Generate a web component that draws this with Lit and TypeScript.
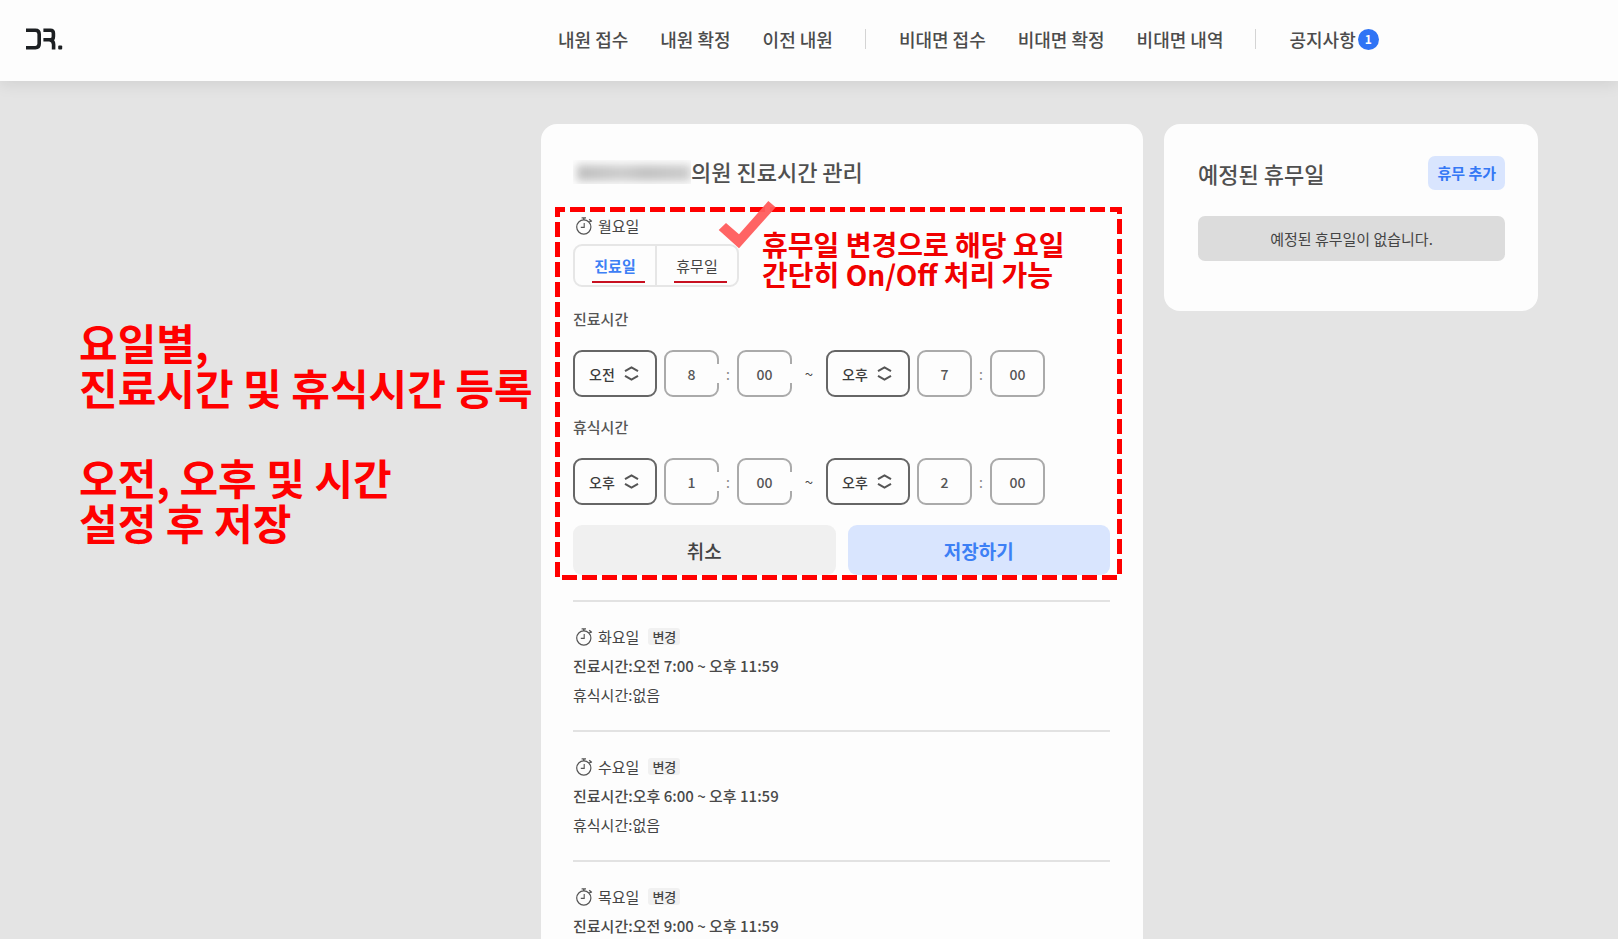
import { LitElement, html, css } from "lit";
import { customElement, property, state } from "lit/decorators.js";
import { classMap } from "lit/directives/class-map.js";

type DayHours = { day: string; open: string; rest: string };
type TimeValue = { half: string; hour: string; minute: string };

const stopwatch = html`<svg class="stopwatch" width="18" height="18" viewBox="0 0 18 18" fill="none" stroke="#555" aria-hidden="true">
  <circle cx="8.8" cy="10" r="7.1" stroke-width="1.2" />
  <path d="M6.6 0.9h4.4M8.8 1v2M14 3.4l1.6 1.4M14.2 2.2l2.6 2.4" stroke-width="1.4" />
  <path d="M9.2 6v4.4H5.8" stroke-width="1.1" />
</svg>`;

@customElement("time-field")
class TimeField extends LitElement {
  @property({ attribute: false }) value: TimeValue = { half: "오전", hour: "0", minute: "00" };
  @property() name = "";
  @property({ type: Boolean }) notched = false;

  static styles = css`
    :host {
      display: flex;
      align-items: center;
      font-family: "Noto Sans CJK KR", sans-serif;
      font-size: 14px;
      font-weight: 500;
      color: #555;
    }
    * {
      box-sizing: border-box;
    }
    .half {
      position: relative;
      margin-right: 7px;
    }
    select,
    input {
      display: block;
      height: 47px;
      margin: 0;
      font: inherit;
      background: #fdfdfd;
      border-radius: 9px;
      outline: none;
    }
    select {
      appearance: none;
      width: 84px;
      padding: 0 0 0 14px;
      color: #3c3c3c;
      border: 2px solid #666;
    }
    .arrows {
      position: absolute;
      right: 18px;
      top: 16px;
      pointer-events: none;
    }
    .number {
      position: relative;
    }
    input {
      width: 55px;
      padding: 0;
      text-align: center;
      color: #555;
      border: 2px solid #aaa;
    }
    .notched .number::after {
      content: "";
      position: absolute;
      right: 0;
      top: 14px;
      width: 3px;
      height: 19px;
      background: #fdfdfd;
    }
    .row {
      display: flex;
      align-items: center;
    }
    .colon {
      width: 18px;
      text-align: center;
      color: #888;
      font-weight: 400;
    }
  `;

  render() {
    const v = this.value;
    return html`<div class=${classMap({ row: true, notched: this.notched })}>
      <div class="half">
        <select aria-label="${this.name} 오전/오후">
          ${["오전", "오후"].map((h) => html`<option ?selected=${h === v.half}>${h}</option>`)}
        </select>
        <svg class="arrows" width="15" height="15" viewBox="0 0 15 15" fill="none" stroke="#555" stroke-width="2" aria-hidden="true">
          <path d="M1 5.2 7.5 1.4 14 5.2M1 9.8l6.5 3.8L14 9.8" />
        </svg>
      </div>
      <div class="number"><input type="text" inputmode="numeric" aria-label="${this.name} 시" .value=${v.hour} /></div>
      <span class="colon">:</span>
      <div class="number"><input type="text" inputmode="numeric" aria-label="${this.name} 분" .value=${v.minute} /></div>
    </div>`;
  }
}

@customElement("app-root")
class AppRoot extends LitElement {
  @state() private status = "진료일";

  private menu = [
    ["내원 접수", "내원 확정", "이전 내원"],
    ["비대면 접수", "비대면 확정", "비대면 내역"],
  ];

  private days: DayHours[] = [
    { day: "화요일", open: "오전 7:00 ~ 오후 11:59", rest: "없음" },
    { day: "수요일", open: "오후 6:00 ~ 오후 11:59", rest: "없음" },
    { day: "목요일", open: "오전 9:00 ~ 오후 11:59", rest: "없음" },
  ];

  private ranges = [
    {
      label: "진료시간",
      from: { half: "오전", hour: "8", minute: "00" },
      to: { half: "오후", hour: "7", minute: "00" },
    },
    {
      label: "휴식시간",
      from: { half: "오후", hour: "1", minute: "00" },
      to: { half: "오후", hour: "2", minute: "00" },
    },
  ];

  static styles = css`
    :host {
      display: flex;
      flex-direction: column;
      height: 100vh;
      overflow: hidden;
      background: #e4e4e4;
      color: #444;
      font-family: "Noto Sans CJK KR", sans-serif;
      font-size: 15px;
      line-height: 24px;
    }
    * {
      box-sizing: border-box;
    }
    h1,
    h2,
    h3,
    p {
      margin: 0;
      font-size: inherit;
      font-weight: inherit;
    }
    button {
      margin: 0;
      padding: 0;
      border: 0;
      font: inherit;
      color: inherit;
      cursor: pointer;
    }

    header {
      flex: none;
      display: grid;
      grid-template-columns: 558fr 1060fr;
      align-items: center;
      height: 81px;
      padding-bottom: 3px;
      background: #fdfdfd;
      box-shadow: 0 2px 16px rgba(0, 0, 0, 0.1);
    }
    .logo {
      justify-self: start;
      display: flex;
      margin-left: 26px;
    }
    nav {
      display: flex;
      align-items: center;
      gap: 32px;
      white-space: nowrap;
      font-size: 18px;
      font-weight: 500;
    }
    nav a {
      display: flex;
      align-items: center;
      gap: 2px;
      color: #4c4c4c;
      text-decoration: none;
    }
    .bar {
      width: 1px;
      height: 20px;
      margin-right: 1px;
      background: #d4d4d4;
    }
    .badge {
      width: 21px;
      height: 21px;
      border-radius: 50%;
      background: #2f74f5;
      color: #fff;
      font-size: 12px;
      font-weight: 700;
      line-height: 19px;
      text-align: center;
    }

    main {
      flex: 1;
      min-height: 0;
      display: grid;
      grid-template-columns: minmax(0, 520fr) minmax(0, 602fr) minmax(0, 374fr);
      column-gap: 21px;
      align-items: start;
      padding: 43px 80px 0 0;
    }
    .note {
      padding: 195px 0 0 79px;
      white-space: nowrap;
      color: #f00;
      font-size: 42px;
      font-weight: 700;
      line-height: 45px;
    }
    .note p + p {
      margin-top: 45px;
    }

    .card {
      background: #fdfdfd;
      border-radius: 16px;
      padding: 30px 33px 50px 32px;
    }
    .title {
      display: flex;
      align-items: center;
      font-size: 22px;
      font-weight: 500;
      line-height: 34px;
      color: #505050;
      white-space: nowrap;
    }
    .masked {
      width: 118px;
      height: 24px;
      margin-top: 2px;
      overflow: hidden;
    }
    .masked::before {
      content: "";
      display: block;
      height: 16px;
      margin: 5px 0 0 4px;
      background: linear-gradient(90deg, #bebebe, #cdcdcd 40%, #c2c2c2 60%, #cccccc);
      filter: blur(4px);
    }

    .editor {
      position: relative;
      margin-top: 26px;
    }
    .day-head {
      display: flex;
      align-items: center;
      color: #444;
    }
    .stopwatch {
      margin: 0 5px 0 2px;
    }
    .toggle {
      display: flex;
      width: 166px;
      height: 43px;
      margin-top: 6px;
      border: 2px solid #e6e6e6;
      border-radius: 9px;
    }
    .toggle label {
      position: relative;
      flex: 1;
      font-size: 15px;
      line-height: 39px;
      text-align: center;
      cursor: pointer;
    }
    .toggle label + label {
      border-left: 2px solid #e6e6e6;
    }
    .toggle .on {
      color: #3d80f5;
      font-weight: 700;
    }
    .toggle input {
      position: absolute;
      opacity: 0;
      margin: 0;
    }
    .toggle label::after {
      content: "";
      position: absolute;
      right: 10px;
      bottom: 2px;
      width: 53px;
      height: 2px;
      background: #c81020;
    }
    .label {
      margin-top: 18px;
      font-weight: 500;
      color: #555;
    }
    .toggle + .label {
      margin-top: 20px;
    }
    .range {
      display: flex;
      align-items: center;
      margin-top: 19px;
    }
    .tilde {
      width: 34px;
      text-align: center;
    }
    .actions {
      display: grid;
      grid-template-columns: 1fr 1fr;
      gap: 12px;
      margin-top: 20px;
    }
    .actions button {
      height: 50px;
      border-radius: 9px;
      padding-top: 2px;
      font-size: 19px;
      font-weight: 500;
      background: #f0f0f0;
    }
    .actions .save {
      background: #d9e5fe;
      color: #3d80f5;
      font-weight: 700;
    }

    .frame {
      position: absolute;
      inset: -7px -12px -5px -18px;
      pointer-events: none;
      background:
        repeating-linear-gradient(90deg, #f00 0 10px, transparent 10px 15px, #f00 15px 20px) 0 0 / 100% 5px no-repeat,
        repeating-linear-gradient(#f00 0 10px, transparent 10px 15px, #f00 15px 20px) 0 0 / 5px calc(100% - 3px) no-repeat,
        repeating-linear-gradient(#f00 0 7px, transparent 7px 12px, #f00 12px 20px) 100% 0 / 5px calc(100% - 3px) no-repeat;
    }
    .frame::after {
      content: "";
      position: absolute;
      left: 7px;
      right: 5px;
      bottom: 0;
      height: 5px;
      background: repeating-linear-gradient(90deg, #f00 0 15px, transparent 15px 20px);
    }
    .check {
      position: absolute;
      left: 145px;
      top: -14px;
    }
    .tip {
      position: absolute;
      left: 189px;
      top: 15px;
      white-space: nowrap;
      color: #f00000;
      font-size: 28px;
      font-weight: 700;
      line-height: 30px;
    }

    .day {
      height: 130px;
      padding-top: 20px;
      border-top: 2px solid #e2e2e2;
      line-height: 29px;
      white-space: nowrap;
    }
    .editor + .day {
      margin-top: 25px;
    }
    .day .open {
      font-weight: 500;
      color: #484848;
    }
    .change {
      margin-left: 9px;
      padding: 0 4px;
      background: #f1f1f1;
      font-size: 13px;
      font-weight: 500;
      line-height: 17px;
      border-radius: 3px;
    }

    .side {
      padding: 32px 33px 50px 34px;
    }
    .side .title {
      justify-content: space-between;
    }
    .add {
      padding: 0 9px;
      border-radius: 7px;
      background: #d9e5fe;
      color: #3578f5;
      font-size: 15px;
      font-weight: 700;
      line-height: 34px;
    }
    .empty {
      margin-top: 26px;
      border-radius: 7px;
      background: #dcdcdc;
      text-align: center;
      line-height: 45px;
    }
  `;

  private toggleItem(name: string) {
    const on = this.status === name;
    return html`<label class=${classMap({ on })}>
      <input type="radio" name="status" .checked=${on} @change=${() => (this.status = name)} />${name}
    </label>`;
  }

  render() {
    return html`
      <header>
        <a class="logo" href="#" aria-label="DR.">
          <svg width="38" height="22" viewBox="0 0 38 22" fill="none" stroke="#1c1f22" stroke-width="3.6">
            <path d="M0 2.3H9.4Q13.2 2.3 13.2 6.2V15.8Q13.2 19.7 9.4 19.7H0" />
            <path d="M17.4 2.3H24.4Q27.4 2.3 27.4 5.3V8.4Q27.4 11.7 24.4 11.7H17.4M23.6 11.7Q27.6 12.4 27.6 16.4V21.4" />
            <rect x="32.2" y="17.4" width="4" height="4" rx="1" fill="#1c1f22" stroke="none" />
          </svg>
        </a>
        <nav>
          ${this.menu.map((group) => html`${group.map((m) => html`<a href="#">${m}</a>`)}<span class="bar"></span>`)}
          <a href="#">공지사항<span class="badge">1</span></a>
        </nav>
      </header>
      <main>
        <aside class="note">
          <p>요일별,<br />진료시간 및 휴식시간 등록</p>
          <p>오전, 오후 및 시간<br />설정 후 저장</p>
        </aside>

        <section class="card">
          <h1 class="title"><span class="masked"></span>의원 진료시간 관리</h1>
          <div class="editor">
            <h2 class="day-head">${stopwatch}월요일</h2>
            <div class="toggle" role="radiogroup" aria-label="월요일">
              ${this.toggleItem("진료일")}${this.toggleItem("휴무일")}
            </div>
            ${this.ranges.map(
              (r) => html`
                <h3 class="label">${r.label}</h3>
                <div class="range">
                  <time-field notched name="${r.label} 시작" .value=${r.from}></time-field>
                  <span class="tilde">~</span>
                  <time-field name="${r.label} 종료" .value=${r.to}></time-field>
                </div>
              `
            )}
            <div class="actions">
              <button type="button">취소</button>
              <button type="button" class="save">저장하기</button>
            </div>
            <div class="frame"></div>
            <svg class="check" width="58" height="50" viewBox="0 0 58 50" aria-hidden="true">
              <path d="M0.7 30 8 23 21 34.3 50.3 1 57.7 7.3 21 48.3Z" fill="#ff5c5c" fill-opacity="0.95" />
            </svg>
            <p class="tip">휴무일 변경으로 해당 요일<br />간단히 On/Off 처리 가능</p>
          </div>
          ${this.days.map(
            (d) => html`<div class="day">
              <h2 class="day-head">${stopwatch}${d.day}<button type="button" class="change">변경</button></h2>
              <p class="open">진료시간:${d.open}</p>
              <p>휴식시간:${d.rest}</p>
            </div>`
          )}
        </section>

        <section class="card side">
          <h2 class="title">예정된 휴무일<button type="button" class="add">휴무 추가</button></h2>
          <p class="empty">예정된 휴무일이 없습니다.</p>
        </section>
      </main>
    `;
  }
}
